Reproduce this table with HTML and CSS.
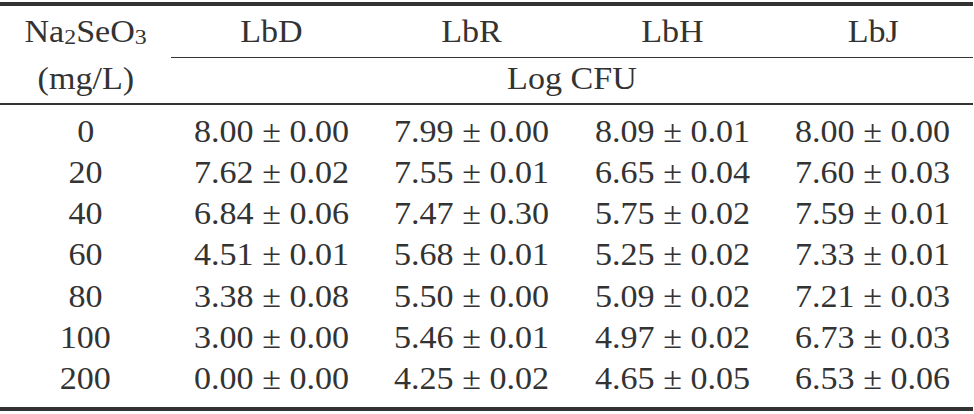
FILE: index.html
```html
<!DOCTYPE html>
<html>
<head>
<meta charset="utf-8">
<link rel="stylesheet" href="styles.css">
</head>
<body>
<div class="table">
  <div class="head">
    <div class="hcell first"><span class="t">Na<sub>2</sub>SeO<sub>3</sub></span></div>
    <div class="hcell strain"><span class="t">LbD</span></div>
    <div class="hcell strain"><span class="t">LbR</span></div>
    <div class="hcell strain"><span class="t">LbH</span></div>
    <div class="hcell strain"><span class="t">LbJ</span></div>
    <div class="hcell2 first"><span class="t">(mg/L)</span></div>
    <div class="hcell2 unit"><span class="t">Log CFU</span></div>
  </div>
  <div class="body">
    <div class="cell"><span class="t">0</span></div><div class="cell"><span class="t">8.00 ± 0.00</span></div><div class="cell"><span class="t">7.99 ± 0.00</span></div><div class="cell"><span class="t">8.09 ± 0.01</span></div><div class="cell"><span class="t">8.00 ± 0.00</span></div>
    <div class="cell"><span class="t">20</span></div><div class="cell"><span class="t">7.62 ± 0.02</span></div><div class="cell"><span class="t">7.55 ± 0.01</span></div><div class="cell"><span class="t">6.65 ± 0.04</span></div><div class="cell"><span class="t">7.60 ± 0.03</span></div>
    <div class="cell"><span class="t">40</span></div><div class="cell"><span class="t">6.84 ± 0.06</span></div><div class="cell"><span class="t">7.47 ± 0.30</span></div><div class="cell"><span class="t">5.75 ± 0.02</span></div><div class="cell"><span class="t">7.59 ± 0.01</span></div>
    <div class="cell"><span class="t">60</span></div><div class="cell"><span class="t">4.51 ± 0.01</span></div><div class="cell"><span class="t">5.68 ± 0.01</span></div><div class="cell"><span class="t">5.25 ± 0.02</span></div><div class="cell"><span class="t">7.33 ± 0.01</span></div>
    <div class="cell"><span class="t">80</span></div><div class="cell"><span class="t">3.38 ± 0.08</span></div><div class="cell"><span class="t">5.50 ± 0.00</span></div><div class="cell"><span class="t">5.09 ± 0.02</span></div><div class="cell"><span class="t">7.21 ± 0.03</span></div>
    <div class="cell"><span class="t">100</span></div><div class="cell"><span class="t">3.00 ± 0.00</span></div><div class="cell"><span class="t">5.46 ± 0.01</span></div><div class="cell"><span class="t">4.97 ± 0.02</span></div><div class="cell"><span class="t">6.73 ± 0.03</span></div>
    <div class="cell"><span class="t">200</span></div><div class="cell"><span class="t">0.00 ± 0.00</span></div><div class="cell"><span class="t">4.25 ± 0.02</span></div><div class="cell"><span class="t">4.65 ± 0.05</span></div><div class="cell"><span class="t">6.53 ± 0.06</span></div>
  </div>
</div>
</body>
</html>
```

FILE: styles.css
```css
html, body {
  margin: 0;
  padding: 0;
  background: #ffffff;
}

.table {
  width: 973px;
  margin-top: 2px;
  border-top: 4px solid #333333;
  border-bottom: 4px solid #333333;
  font-family: "Liberation Serif", "Times New Roman", Times, serif;
  font-size: 31px;
  color: #333333;
}

.head,
.body {
  display: grid;
  grid-template-columns: 171px repeat(4, 1fr);
}

.head {
  border-bottom: 2px solid #333333;
}

.t {
  display: inline-block;
  white-space: nowrap;
  line-height: 1.15;
  transform: scaleX(1.1);
}

.hcell {
  box-sizing: border-box;
  height: 52px;
  display: flex;
  align-items: center;
  justify-content: center;
}

.hcell.strain {
  border-bottom: 1px solid #333333;
}

.hcell2 {
  box-sizing: border-box;
  height: 45px;
  padding-bottom: 4px;
  display: flex;
  align-items: center;
  justify-content: center;
}

.hcell2.unit {
  grid-column: 2 / 6;
}

sub {
  font-size: 70%;
  vertical-align: -0.1em;
  line-height: 0;
}

.body {
  padding: 6px 0 8px;
  grid-auto-rows: 41.2px;
}

.cell {
  display: flex;
  align-items: center;
  justify-content: center;
}
```
